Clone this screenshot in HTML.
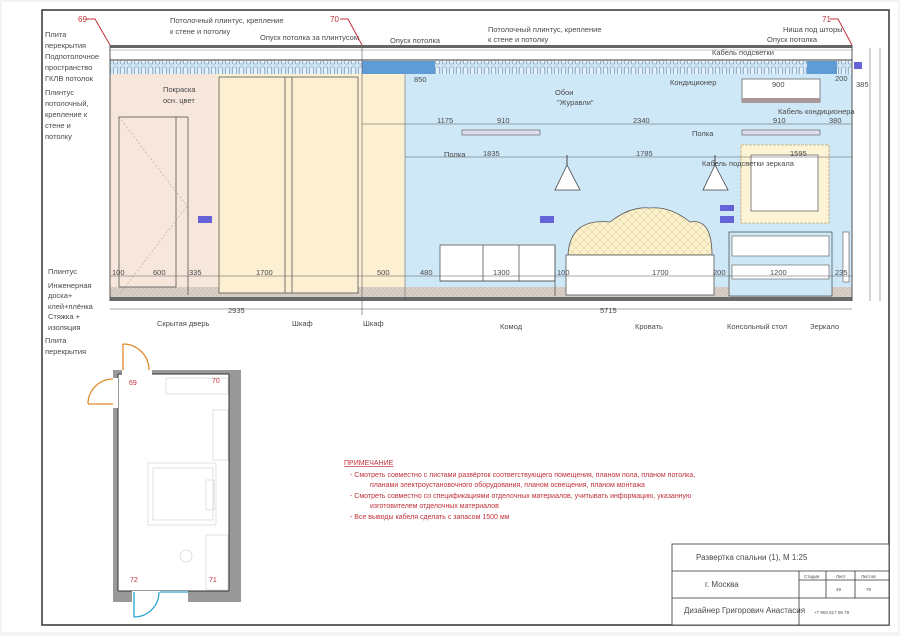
<!DOCTYPE html>
<html><head><meta charset="utf-8"><style>
html,body{margin:0;padding:0;background:#fff}
svg{display:block}
text{font-family:"Liberation Sans",sans-serif;fill:#4a4a4a}
.r{fill:#c0303a}
</style></head><body>
<svg width="900" height="636" viewBox="0 0 900 636" xmlns="http://www.w3.org/2000/svg">
<defs>
<pattern id="st" width="7" height="13" patternUnits="userSpaceOnUse"><rect width="7" height="13" fill="#cfe6f7"/><rect x="1.5" y="2" width="4" height="10" rx="1" fill="#e4f1fb" stroke="#6a8aa8" stroke-width="0.6"/></pattern>
<pattern id="fl" width="4" height="4" patternUnits="userSpaceOnUse"><rect width="4" height="4" fill="#d9cfc6"/><path d="M0 4L4 0" stroke="#bfb3a8" stroke-width="0.5"/></pattern>
<pattern id="hb" width="8" height="8" patternUnits="userSpaceOnUse"><rect width="8" height="8" fill="#fbf1cf"/><path d="M0 0L8 8M8 0L0 8" stroke="#d9c47a" stroke-width="0.5"/></pattern>
</defs>
<rect x="0" y="0" width="900" height="636" fill="#f4f4f4"/>
<rect x="2" y="2" width="896" height="630" fill="#fff"/>
<rect x="42" y="10" width="847" height="615" fill="none" stroke="#333" stroke-width="1.5"/>

<rect x="110" y="74" width="107" height="213" fill="#f6e6dc"/>
<rect x="217" y="74" width="188" height="213" fill="#fdf0d2"/>
<rect x="405" y="74" width="447" height="213" fill="#cfe8f8"/>
<rect x="110" y="45" width="742" height="3" fill="#666"/>
<line x1="110" y1="50" x2="852" y2="50" stroke="#888" stroke-width="0.6"/>
<rect x="110" y="61" width="742" height="13" fill="url(#st)"/>
<rect x="362" y="61" width="73" height="13" fill="#5f9cd6"/>
<rect x="807" y="61" width="30" height="13" fill="#5f9cd6"/>
<rect x="110" y="59" width="742" height="2" fill="#999"/>
<rect x="110" y="287" width="742" height="10" fill="url(#fl)"/>
<rect x="110" y="297" width="742" height="4" fill="#6a6a6a"/>
<line x1="110" y1="45" x2="110" y2="301" stroke="#555" stroke-width="1"/>
<line x1="852" y1="45" x2="852" y2="301" stroke="#555" stroke-width="1"/>
<rect x="119" y="117" width="57" height="170" fill="none" stroke="#555" stroke-width="0.8"/>
<line x1="176" y1="117" x2="188" y2="117" stroke="#555" stroke-width="0.8"/>
<line x1="188" y1="117" x2="188" y2="295" stroke="#555" stroke-width="0.8"/>
<path d="M119 117 L187 206 L119 295" fill="none" stroke="#a08070" stroke-width="0.5" stroke-dasharray="2 2"/>
<rect x="219" y="77" width="139" height="216" fill="#fdf0d2" stroke="#555" stroke-width="0.8"/>
<line x1="285" y1="77" x2="285" y2="293" stroke="#555" stroke-width="0.8"/>
<line x1="292" y1="77" x2="292" y2="293" stroke="#555" stroke-width="0.8"/>
<line x1="362" y1="48" x2="362" y2="315" stroke="#555" stroke-width="0.6"/>
<rect x="462" y="130" width="78" height="5" fill="#dde" stroke="#555" stroke-width="0.6"/>
<rect x="742" y="130" width="78" height="5" fill="#dde" stroke="#555" stroke-width="0.6"/>
<rect x="742" y="79" width="78" height="23" fill="#fff" stroke="#555" stroke-width="0.7"/>
<rect x="742" y="98" width="78" height="5" fill="#a99"/>
<rect x="741" y="145" width="88" height="78" fill="#fdf4d8" stroke="#c9a860" stroke-width="0.8" stroke-dasharray="3 1"/>
<rect x="751" y="155" width="67" height="56" fill="#fff" stroke="#555" stroke-width="0.7"/>
<path d="M567 165 L555 190 L580 190Z" fill="#fff" stroke="#444" stroke-width="0.8"/>
<line x1="567" y1="155" x2="567" y2="165" stroke="#444"/>
<path d="M715 165 L703 190 L728 190Z" fill="#fff" stroke="#444" stroke-width="0.8"/>
<line x1="715" y1="155" x2="715" y2="165" stroke="#444"/>
<rect x="440" y="245" width="115" height="36" fill="#fff" stroke="#555" stroke-width="0.8"/>
<line x1="483" y1="245" x2="483" y2="281" stroke="#555" stroke-width="0.8"/>
<line x1="519" y1="245" x2="519" y2="281" stroke="#555" stroke-width="0.8"/>
<line x1="440" y1="281" x2="555" y2="281" stroke="#555" stroke-width="0.8"/>
<line x1="555" y1="245" x2="555" y2="296" stroke="#555" stroke-width="0.8"/>
<path d="M568 255 Q570 218 610 222 Q630 206 650 208 Q670 206 690 222 Q712 218 712 255Z" fill="url(#hb)" stroke="#555" stroke-width="0.8"/>
<rect x="566" y="255" width="148" height="40" fill="#fff" stroke="#555" stroke-width="0.8"/>
<rect x="729" y="232" width="103" height="64" fill="#cfe8f8" stroke="#555" stroke-width="0.8"/>
<rect x="732" y="236" width="97" height="20" fill="#fff" stroke="#555" stroke-width="0.6"/>
<rect x="732" y="265" width="97" height="14" fill="#fff" stroke="#555" stroke-width="0.6"/>
<rect x="843" y="232" width="6" height="50" fill="#fff" stroke="#555" stroke-width="0.6"/>
<rect x="198" y="216" width="14" height="7" fill="#6464d8"/>
<rect x="540" y="216" width="14" height="7" fill="#6464d8"/>
<rect x="720" y="205" width="14" height="6" fill="#6464d8"/>
<rect x="720" y="216" width="14" height="7" fill="#6464d8"/>
<rect x="854" y="62" width="8" height="7" fill="#6464d8"/>
<g stroke="#555" stroke-width="0.5">
<line x1="110" y1="276" x2="852" y2="276"/>
<line x1="110" y1="309" x2="852" y2="309"/>
<line x1="362" y1="124" x2="852" y2="124"/>
<line x1="405" y1="157" x2="852" y2="157"/>
<line x1="870" y1="48" x2="870" y2="301"/>
<line x1="880" y1="48" x2="880" y2="301"/>
<line x1="405" y1="74" x2="405" y2="301"/>
</g>
<g font-size="7.5">
<text x="112" y="275">100</text><text x="153" y="275">600</text><text x="189" y="275">335</text><text x="256" y="275">1700</text><text x="377" y="275">500</text><text x="420" y="275">480</text>
<text x="493" y="275">1300</text><text x="557" y="275">100</text><text x="652" y="275">1700</text><text x="713" y="275">200</text><text x="770" y="275">1200</text><text x="835" y="275">235</text>
<text x="228" y="313">2935</text><text x="600" y="313">5715</text>
<text x="437" y="123">1175</text><text x="497" y="123">910</text><text x="633" y="123">2340</text><text x="773" y="123">910</text><text x="829" y="123">380</text>
<text x="483" y="156">1835</text><text x="636" y="156">1785</text><text x="790" y="156">1595</text>
<text x="414" y="82">850</text><text x="772" y="87">900</text><text x="835" y="81">200</text><text x="856" y="87">385</text>
<text x="555" y="95">Обои</text><text x="557" y="105">"Журавли"</text>
<text x="163" y="92">Покраска</text><text x="163" y="103">осн. цвет</text>
</g>
<g font-size="7.5">
<text x="45" y="37">Плита</text><text x="45" y="48">перекрытия</text><text x="45" y="59">Подпотолочное</text><text x="45" y="70">пространство</text><text x="45" y="81">ГКЛВ потолок</text>
<text x="45" y="95">Плинтус</text><text x="45" y="106">потолочный,</text><text x="45" y="117">крепление к</text><text x="45" y="128">стене и</text><text x="45" y="139">потолку</text>
<text x="48" y="274">Плинтус</text><text x="48" y="288">Инженерная</text><text x="48" y="298">доска+</text><text x="48" y="309">клей+плёнка</text><text x="48" y="319">Стяжка +</text><text x="48" y="330">изоляция</text><text x="45" y="343">Плита</text><text x="45" y="354">перекрытия</text>
<text x="170" y="23">Потолочный плинтус, крепление</text><text x="170" y="34">к стене и потолку</text>
<text x="260" y="40">Опуск потолка за плинтусом</text><text x="390" y="43">Опуск потолка</text>
<text x="488" y="32">Потолочный плинтус, крепление</text><text x="488" y="42">к стене и потолку</text>
<text x="783" y="32">Ниша под шторы</text><text x="767" y="42">Опуск потолка</text><text x="712" y="55">Кабель подсветки</text>
<text x="670" y="85">Кондиционер</text><text x="778" y="114">Кабель кондиционера</text><text x="692" y="136">Полка</text><text x="444" y="157">Полка</text>
<text x="702" y="166">Кабель подсветки зеркала</text>
<text x="157" y="326">Скрытая дверь</text><text x="292" y="326">Шкаф</text><text x="363" y="326">Шкаф</text><text x="500" y="329">Комод</text><text x="635" y="329">Кровать</text><text x="727" y="329">Консольный стол</text><text x="810" y="329">Зеркало</text>
</g>
<g font-size="8"><text class="r" x="78" y="22">69</text><text class="r" x="330" y="22">70</text><text class="r" x="822" y="22">71</text></g>
<path d="M86 19 L95 19 L110 45 M340 19 L348 19 L362 45 M830 19 L838 19 L852 45" stroke="#c0303a" fill="none" stroke-width="1"/>

<rect x="113" y="370" width="128" height="232" fill="#999"/>
<rect x="118" y="374" width="111" height="217" fill="#fff"/>
<line x1="118" y1="374" x2="118" y2="591" stroke="#333"/><line x1="229" y1="374" x2="229" y2="591" stroke="#333"/>
<line x1="118" y1="374" x2="229" y2="374" stroke="#333"/><line x1="118" y1="591" x2="229" y2="591" stroke="#333"/>
<rect x="122" y="370" width="30" height="5" fill="#fff"/>
<rect x="113" y="378" width="5" height="30" fill="#fff"/>
<path d="M123 344 L123 370 M123 344 A26 26 0 0 1 149 370" stroke="#e08a2a" fill="none" stroke-width="1.3"/>
<path d="M113 404 L88 404 M88 404 A25 25 0 0 1 113 379" stroke="#e08a2a" fill="none" stroke-width="1.3"/>
<rect x="132" y="591" width="56" height="11" fill="#fff"/>
<path d="M134 592 L134 617 A25 25 0 0 0 159 592 M160 592 L188 592" stroke="#2aa8d0" fill="none" stroke-width="1.3"/>
<g stroke="#ccc" fill="none" stroke-width="0.6">
<rect x="166" y="378" width="62" height="16"/><rect x="213" y="410" width="15" height="50"/>
<rect x="148" y="463" width="68" height="62"/><rect x="153" y="468" width="60" height="52"/><rect x="206" y="480" width="8" height="30"/>
<rect x="206" y="535" width="22" height="55"/><circle cx="186" cy="556" r="6"/>
</g>
<g font-size="7"><text class="r" x="129" y="385">69</text><text class="r" x="212" y="383">70</text><text class="r" x="130" y="582">72</text><text class="r" x="209" y="582">71</text></g>

<g font-size="7">
<text class="r" x="344" y="465" text-decoration="underline">ПРИМЕЧАНИЕ</text>
<text class="r" x="350" y="477">-      Смотреть совместно с листами развёрток соответствующего помещения, планом пола, планом потолка,</text>
<text class="r" x="370" y="487">планами электроустановочного оборудования, планом освещения, планом монтажа</text>
<text class="r" x="350" y="498">-      Смотреть совместно со спецификациями отделочных материалов, учитывать информацию, указанную</text>
<text class="r" x="370" y="508">изготовителем отделочных материалов</text>
<text class="r" x="350" y="519">-      Все выводы кабеля сделать с запасом 1500 мм</text>
</g>

<g stroke="#333" fill="none" stroke-width="0.8">
<rect x="672" y="544" width="217" height="81" fill="#fff"/>
<line x1="672" y1="571" x2="889" y2="571"/><line x1="672" y1="598" x2="889" y2="598"/>
<line x1="799" y1="571" x2="799" y2="625"/><line x1="826" y1="571" x2="826" y2="598"/><line x1="855" y1="571" x2="855" y2="598"/>
<line x1="799" y1="580" x2="889" y2="580"/>
</g>
<g font-size="8"><text x="696" y="560">Развертка спальни (1), М 1:25</text><text x="705" y="587">г. Москва</text><text x="684" y="613">Дизайнер Григорович Анастасия</text></g>
<g font-size="4.5"><text x="804" y="578">Стадия</text><text x="836" y="578">Лист</text><text x="861" y="578">Листов</text><text x="836" y="591">49</text><text x="866" y="591">79</text><text x="814" y="614">+7 903 617 05 79</text></g>
</svg>
</body></html>
